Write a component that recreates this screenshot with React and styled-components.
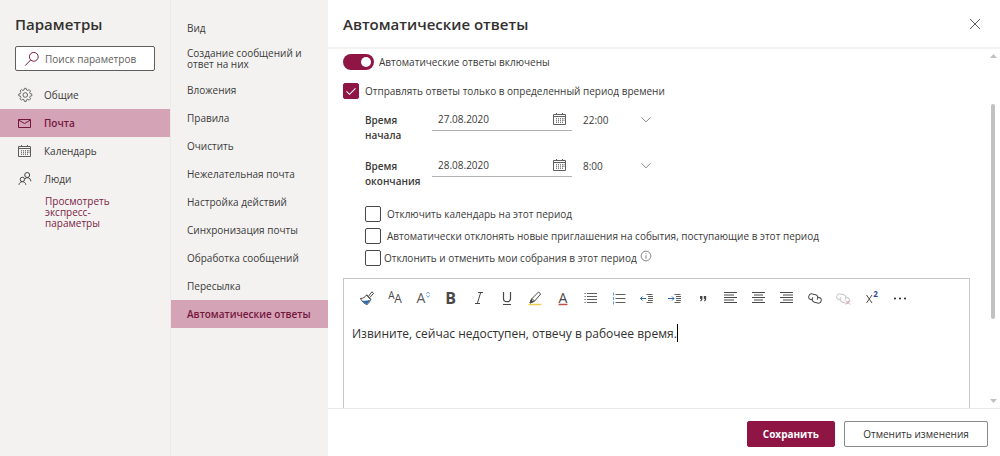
import React, { useState } from "react";
import styled, { createGlobalStyle } from "styled-components";

const GlobalStyle = createGlobalStyle`
  * {
    box-sizing: border-box;
  }

  body {
    margin: 0;
    background: #fff;
    color: #3b3a39;
    font-family: "Open Sans", "Noto Sans", sans-serif;
    font-size: 10px;
    line-height: 16px;
  }

  button,
  input,
  select,
  textarea {
    margin: 0;
    padding: 0;
    border: 0;
    outline: 0;
    background: none;
    color: inherit;
    font: inherit;
  }
`;

const Page = styled.div`
  display: flex;
  height: 100vh;
  overflow: hidden;
`;

// Left column
const Sidebar = styled.nav`
  flex: none;
  width: 170px;
  background: #f3f2f1;
`;

const Title = styled.h1`
  margin: 0;
  padding: 12px 15px 10px;
  color: #323130;
  font-size: 15px;
  font-weight: 600;
  line-height: 24px;
`;

const Search = styled.label`
  display: flex;
  align-items: center;
  gap: 5px;
  height: 25px;
  margin: 0 15px 10px;
  padding-left: 8px;
  border: 1px solid #605e5c;
  border-radius: 2px;
  background: #fff;

  svg {
    flex: none;
  }
`;

const SearchInput = styled.input`
  width: 100%;
  min-width: 0;

  &::placeholder {
    color: #605e5c;
    opacity: 1;
  }
`;

const NavLink = styled.a`
  display: flex;
  align-items: center;
  gap: 11px;
  height: 28px;
  padding-left: 17px;
  background: ${(props) => (props.$active ? "#d4a3b6" : "transparent")};
  color: ${(props) => (props.$active ? "#74163c" : "inherit")};
  font-weight: ${(props) => (props.$active ? 600 : 400)};
  text-decoration: none;
`;

const QuickLink = styled.a`
  display: block;
  width: 90px;
  margin: 3px 0 0 45px;
  color: #7b1d44;
  line-height: 11px;
  text-decoration: none;
`;

// Middle column
const Sections = styled.nav`
  flex: none;
  width: 158px;
  padding-top: 14px;
  border-left: 1px solid #eceae9;
  background: #f3f2f1;
`;

const SectionLink = styled.a`
  display: flex;
  align-items: center;
  min-height: 28px;
  padding: 6px 10px 6px 16px;
  background: ${(props) => (props.$active ? "#d4a3b6" : "transparent")};
  color: ${(props) => (props.$active ? "#74163c" : "inherit")};
  font-weight: ${(props) => (props.$active ? 600 : 400)};
  line-height: 11px;
  text-decoration: none;
`;

// Right panel
const Panel = styled.main`
  display: flex;
  flex: 1;
  flex-direction: column;
  min-width: 0;
`;

const PanelHeader = styled.header`
  display: flex;
  align-items: center;
  justify-content: space-between;
  height: 49px;
  padding: 0 17px 0 15px;
  border-bottom: 2px solid #f3f2f1;
`;

const PanelTitle = styled.h2`
  margin: 0;
  color: #323130;
  font-size: 15px;
  font-weight: 600;
  line-height: 24px;
`;

const IconButton = styled.button`
  display: flex;
  align-items: center;
  justify-content: center;
  cursor: pointer;
`;

const PanelBody = styled.div`
  display: flex;
  flex: 1;
  min-height: 0;
`;

const Form = styled.form`
  display: flex;
  flex: 1;
  flex-direction: column;
  min-width: 0;
  padding: 5px 16px 0 15px;
  overflow: hidden;
`;

const SwitchLabel = styled.label`
  display: flex;
  flex: none;
  align-items: center;
  gap: 5px;
  height: 16px;
`;

const Switch = styled.input`
  display: flex;
  align-items: center;
  justify-content: flex-end;
  width: 31px;
  height: 16px;
  padding: 0 3px;
  border-radius: 8px;
  background: #8f1544;
  appearance: none;

  &::before {
    width: 10px;
    height: 10px;
    border-radius: 50%;
    background: #fff;
    content: "";
  }

  &:not(:checked) {
    justify-content: flex-start;
    background: #605e5c;
  }
`;

const CheckLabel = styled.label`
  display: flex;
  align-items: center;
  gap: ${(props) => (props.$tight ? 3 : 6)}px;
  height: 16px;
`;

const CheckCell = styled.span`
  display: grid;
  place-items: center;

  > * {
    grid-area: 1 / 1;
  }

  svg {
    pointer-events: none;
  }
`;

const CheckInput = styled.input`
  width: 16px;
  height: 16px;
  border: 1px solid #4a4846;
  border-radius: 2px;
  background: #fff;
  appearance: none;

  &:checked {
    border-color: #8f1544;
    background: #8f1544;
  }
`;

const Period = styled.div`
  display: flex;
  flex: none;
  flex-direction: column;
  margin-top: 13px;
  padding-left: 22px;
`;

const PeriodTop = styled.div`
  flex: none;
  margin-top: 13px;
`;

const TimeRow = styled.div`
  display: flex;
  align-items: flex-start;
  height: 46px;
`;

const TimeLabel = styled.label`
  width: 67px;
  padding-top: 1px;
  font-weight: 600;
  line-height: 15px;
`;

const DateField = styled.div`
  display: flex;
  align-items: center;
  width: 140px;
  height: 19px;
  padding: 0 4px 4px 6px;
  border-bottom: 1px solid #b3b0ad;
`;

const DateInput = styled.input`
  flex: 1;
  min-width: 0;
`;

const TimeField = styled.div`
  display: grid;
  align-items: center;
  width: 69px;
  height: 19px;
  margin-left: 11px;
  padding-bottom: 4px;

  > * {
    grid-area: 1 / 1;
  }

  svg {
    justify-self: end;
    pointer-events: none;
  }
`;

const TimeSelect = styled.select`
  width: 100%;
  appearance: none;
`;

const Options = styled.div`
  display: flex;
  flex-direction: column;
  gap: 6px;
  margin-top: 2px;
`;

const OptionRow = styled.div`
  display: flex;
  align-items: flex-start;
  gap: 3px;
`;

const Editor = styled.div`
  display: flex;
  flex: 1;
  flex-direction: column;
  margin-top: 12px;
  border: 1px solid #c8c6c4;
  border-bottom: 0;
`;

const Toolbar = styled.div`
  display: flex;
  padding: 9px 0 0 9px;
`;

const ToolButton = styled(IconButton)`
  flex: none;
  width: 28px;
  height: 20px;

  svg {
    overflow: visible;
  }
`;

const Message = styled.div`
  display: flex;
  padding: 16px 8px 0;
  color: #323130;
  font-size: 12px;
  line-height: 20px;
`;

const MessageInput = styled.textarea`
  display: block;
  height: 20px;
  overflow: hidden;
  field-sizing: content;
  resize: none;
  white-space: pre;
`;

const Caret = styled.span`
  width: 1px;
  height: 18px;
  background: #000;
`;

const Scrollbar = styled.div`
  display: flex;
  flex: none;
  flex-direction: column;
  align-items: center;
  width: 14px;
  padding: 5px 0;
`;

const ScrollTrack = styled.div`
  flex: 1;
  width: 4px;
  padding-top: 46px;
`;

const ScrollThumb = styled.div`
  height: 73%;
  border-radius: 2px;
  background: #c1c1c1;
`;

const PanelFooter = styled.footer`
  display: flex;
  justify-content: flex-end;
  gap: 9px;
  height: 48px;
  padding: 12px 12px 0;
  border-top: 1px solid #eae8e7;
`;

const ActionButton = styled.button`
  min-width: ${(props) => (props.$primary ? 88 : 144)}px;
  height: 26px;
  padding: 0 15px;
  border: 1px solid ${(props) => (props.$primary ? "#8f1544" : "#8a8886")};
  border-radius: 2px;
  background: ${(props) => (props.$primary ? "#8f1544" : "#fff")};
  color: ${(props) => (props.$primary ? "#fff" : "#323130")};
  font-weight: ${(props) => (props.$primary ? 700 : 400)};
  cursor: pointer;
`;

const Icon = ({ size = 16, children, ...rest }) => (
  <svg
    width={size}
    height={size}
    viewBox="0 0 16 16"
    fill="none"
    stroke="currentColor"
    strokeWidth="1"
    aria-hidden="true"
    {...rest}
  >
    {children}
  </svg>
);

const SearchIcon = () => (
  <Icon color="#7b1d44">
    <circle cx="9.8" cy="5.8" r="4.4" />
    <path d="M6.7 9 1.2 14.6" />
  </Icon>
);

const GearIcon = () => (
  <Icon viewBox="-1 -1 18 18" stroke="#605e5c" strokeWidth="1.1">
    <path
      d="M6.9 1h2.2l.4 2 1.5.6 1.7-1.1 1.7 1.7-1.1 1.7.6 1.5 2 .4v2.2l-2 .4-.6 1.5 1.1 1.7-1.7 1.7-1.7-1.1-1.5.6-.4 2H6.9l-.4-2-1.5-.6-1.7 1.1-1.7-1.7 1.1-1.7-.6-1.5-2-.4V7.8l2-.4.6-1.5-1.1-1.7 1.7-1.7L5 3.6 6.5 3z"
      transform="translate(.9 -.4) scale(.93)"
    />
    <circle cx="8.3" cy="8" r="2.6" />
  </Icon>
);

const MailIcon = () => (
  <Icon>
    <path d="M1.5 4.5h12v8h-12zM1.5 5l6 3.5 6-3.5" />
  </Icon>
);

const CalendarIcon = () => (
  <Icon stroke="#605e5c">
    <path d="M1.5 3.5h12v10h-12zM1.5 5.5h12M4.5 2v2M10.5 2v2" />
    <path
      d="M4.5 7v5M6.5 7v5M8.5 7v5M10.5 7v5M12 7v3"
      strokeDasharray="1.4 .5"
      strokeWidth="0.8"
    />
  </Icon>
);

const PeopleIcon = () => (
  <Icon stroke="#4a4846">
    <circle cx="10.2" cy="4" r="2.5" />
    <path d="M8 7.7c1-.8 1.8-1.1 2.8-1 1.7.2 2.9 1.6 3.1 3.6" />
    <circle cx="5.4" cy="8.4" r="2.2" />
    <path d="M2 13.8c.2-2 1.6-3.1 3.4-3.1s3.2 1.1 3.4 3.1" />
  </Icon>
);

const ChevronIcon = () => (
  <Icon size={12} stroke="#605e5c">
    <path d="M2 4.5l6 6 6-6" />
  </Icon>
);

const InfoIcon = () => (
  <Icon size={12} stroke="#605e5c">
    <circle cx="8" cy="8" r="6.5" />
    <path d="M8 7v4.5M8 4.2v1.4" />
  </Icon>
);

const lines = (ends) => ends.map(([a, b], i) => `M${a} ${2.5 + i * 2.5}H${b}`).join("");

const IndentIcon = ({ right }) => (
  <Icon stroke="#605e5c">
    <path d="M7.5 4.5h6M9 6.5h5M9 8.5h5M9 10.5h5M7.5 12.5h6" />
    <path
      d={right ? "M1 8.5h6M5 6.5l2 2-2 2" : "M1.5 8.5H7M3.5 6.5l-2 2 2 2"}
      stroke="#2b6cb0"
    />
  </Icon>
);

const LinkShape = () => (
  <g transform="rotate(14 8 8.5)">
    <path d="M6 10.5H4.3a2.9 2.9 0 0 1 0-5.8h3.4a2.9 2.9 0 0 1 2.5 4.4" />
    <path d="M10 6.5h1.7a2.9 2.9 0 0 1 0 5.8H8.3a2.9 2.9 0 0 1-2.5-4.4" />
  </g>
);

const Glyph = ({ children, size = 15, x = 8, y = 13, ...rest }) => (
  <text x={x} y={y} fontSize={size} textAnchor="middle" fill="#4a4846" stroke="none" {...rest}>
    {children}
  </text>
);

const tools = [
  {
    name: "Формат по образцу",
    icon: (
      <Icon stroke="#4a4846">
        <path
          d="M1.5 8.5c2.5 0 4.5-1.2 6-3.5l4 4.5c-.6 2.2-1.7 3.9-3.5 5-2.800-.8-5-2.800-6.500-6z"
          fill="#fff"
        />
        <path
          d="M3.2 10.5c2.8.6 5.3.3 7.6-.8-.6 2-1.5 3.4-2.9 4.3-1.9-.6-3.5-1.7-4.7-3.5z"
          fill="#2b6cb0"
          stroke="none"
        />
        <path d="M7.5 4.5l4.5 5M9.5 6.3l3.4-4.5 1.7 1.5-3.8 4.3" />
      </Icon>
    ),
  },
  {
    name: "Шрифт",
    icon: (
      <Icon>
        <Glyph x={4.5} y={9} size={10}>A</Glyph>
        <Glyph x={11} y={13} size={12}>A</Glyph>
      </Icon>
    ),
  },
  {
    name: "Размер шрифта",
    icon: (
      <Icon>
        <Glyph x={6} y={13} size={14} fill="#605e5c">A</Glyph>
        <path d="M11.3 4 13 2l1.7 2M11.3 5.3l1.7 2 1.7-2" stroke="#5b9bd5" strokeWidth="0.9" />
      </Icon>
    ),
  },
  {
    name: "Полужирный",
    icon: (
      <Icon>
        <Glyph x={7.5} size={16} y={14} fontWeight="700">B</Glyph>
      </Icon>
    ),
  },
  {
    name: "Курсив",
    icon: (
      <Icon stroke="#4a4846">
        <path d="M7 2.5h5M4 13.5h5M9.7 2.5l-3.4 11" />
      </Icon>
    ),
  },
  {
    name: "Подчеркнутый",
    icon: (
      <Icon stroke="#4a4846">
        <path d="M4.5 2v6.5c0 2 1.2 3.2 3.5 3.2s3.5-1.2 3.5-3.2V2" strokeWidth="1.2" />
        <path d="M4 14.5h8" />
      </Icon>
    ),
  },
  {
    name: "Цвет выделения",
    icon: (
      <Icon stroke="#4a4846">
        <path d="M1.5 14.5h13" stroke="#f2cf4a" strokeWidth="1.5" />
        <path d="M3 13l1.5-4L11.5 2l2.2 2-6 7zM4.7 8.5l3 2.5" />
        <path d="M3 13l1-3 2.2 1.7z" fill="#4a4846" />
      </Icon>
    ),
  },
  {
    name: "Цвет шрифта",
    icon: (
      <Icon>
        <Glyph y={12.5} size={14}>A</Glyph>
        <path d="M3.5 14.5h9" stroke="#c0504d" strokeWidth="1.5" />
      </Icon>
    ),
  },
  {
    name: "Маркеры",
    icon: (
      <Icon stroke="#605e5c">
        <path d="M4 3.5h10M4 6.5h10M4 9.5h10M4 12.5h10" />
        <path d="M1.5 3.5h1.2M1.5 6.5h1.2M1.5 9.5h1.2M1.5 12.5h1.2" />
      </Icon>
    ),
  },
  {
    name: "Нумерация",
    icon: (
      <Icon stroke="#605e5c">
        <path d="M4.5 4.5h10M4.5 8.5h10M4.5 12.5h10" />
        <path d="M2.5 2.5v3M2.5 7v3M2.5 11.5v3" stroke="#5b9bd5" />
      </Icon>
    ),
  },
  { name: "Уменьшить отступ", icon: <IndentIcon /> },
  { name: "Увеличить отступ", icon: <IndentIcon right /> },
  {
    name: "Цитата",
    icon: (
      <Icon fill="#4a4846" stroke="none">
        <path d="M5 6h2.4v2.8c0 1.4-.7 2.3-1.9 2.7l-.4-.7c.7-.4 1-.9 1-1.7H5zM8.8 6h2.4v2.8c0 1.4-.7 2.3-1.9 2.7l-.4-.7c.7-.4 1-.9 1-1.7H8.8z" />
      </Icon>
    ),
  },
  {
    name: "По левому краю",
    icon: (
      <Icon stroke="#4a4846">
        <path d={lines([[1, 14], [1, 11], [1, 14], [1, 11], [1, 14]])} />
      </Icon>
    ),
  },
  {
    name: "По центру",
    icon: (
      <Icon stroke="#4a4846">
        <path d={lines([[1, 14], [3, 12], [1, 14], [3, 12], [1, 14]])} />
      </Icon>
    ),
  },
  {
    name: "По правому краю",
    icon: (
      <Icon stroke="#4a4846">
        <path d={lines([[1, 14], [4, 14], [1, 14], [4, 14], [1, 14]])} />
      </Icon>
    ),
  },
  {
    name: "Вставить ссылку",
    icon: (
      <Icon stroke="#4a4846">
        <LinkShape />
      </Icon>
    ),
  },
  {
    name: "Удалить ссылку",
    icon: (
      <Icon stroke="#c8c6c4">
        <LinkShape />
        <path d="M11 10.5l4 4M15 10.5l-4 4" stroke="#c9a0b0" />
      </Icon>
    ),
  },
  {
    name: "Надстрочный",
    icon: (
      <Icon>
        <path d="M3.5 5l5.5 8M9 5l-5.5 8" stroke="#4a4846" />
        <Glyph x={12.5} y={7} size={8} fill="#1f4e9c" fontWeight="700">2</Glyph>
      </Icon>
    ),
  },
  {
    name: "Еще",
    icon: (
      <Icon fill="#201f1e" stroke="none">
        <circle cx="4" cy="8.5" r="1" />
        <circle cx="9" cy="8.5" r="1" />
        <circle cx="14" cy="8.5" r="1" />
      </Icon>
    ),
  },
];

const navItems = [
  { label: "Общие", icon: <GearIcon /> },
  { label: "Почта", icon: <MailIcon />, active: true },
  { label: "Календарь", icon: <CalendarIcon /> },
  { label: "Люди", icon: <PeopleIcon /> },
];

const sections = [
  "Вид",
  "Создание сообщений и ответ на них",
  "Вложения",
  "Правила",
  "Очистить",
  "Нежелательная почта",
  "Настройка действий",
  "Синхронизация почты",
  "Обработка сообщений",
  "Пересылка",
  "Автоматические ответы",
];

const Checkbox = ({ label, tight, defaultChecked = false }) => {
  const [checked, setChecked] = useState(defaultChecked);

  return (
    <CheckLabel $tight={tight}>
      <CheckCell>
        <CheckInput
          type="checkbox"
          checked={checked}
          onChange={(e) => setChecked(e.target.checked)}
        />
        {checked && (
          <Icon size={12} stroke="#fff" strokeWidth="1.4">
            <path d="M2 8.5l4 4 8-8" />
          </Icon>
        )}
      </CheckCell>
      {label}
    </CheckLabel>
  );
};

const TimePeriod = ({ id, label, date, time }) => (
  <TimeRow>
    <TimeLabel htmlFor={id}>{label}</TimeLabel>
    <DateField>
      <DateInput id={id} defaultValue={date} />
      <IconButton type="button" aria-label="Выбрать дату">
        <CalendarIcon />
      </IconButton>
    </DateField>
    <TimeField>
      <TimeSelect aria-label={label} defaultValue={time}>
        <option>{time}</option>
      </TimeSelect>
      <ChevronIcon />
    </TimeField>
  </TimeRow>
);

const App = () => {
  const [enabled, setEnabled] = useState(true);
  const [message, setMessage] = useState(
    "Извините, сейчас недоступен, отвечу в рабочее время."
  );

  return (
    <Page>
      <GlobalStyle />
      <Sidebar>
        <Title>Параметры</Title>
        <Search>
          <SearchIcon />
          <SearchInput placeholder="Поиск параметров" aria-label="Поиск параметров" />
        </Search>
        {navItems.map((item) => (
          <NavLink key={item.label} href="#" $active={item.active}>
            {item.icon}
            {item.label}
          </NavLink>
        ))}
        <QuickLink href="#">Просмотреть экспресс-параметры</QuickLink>
      </Sidebar>

      <Sections>
        {sections.map((name) => (
          <SectionLink key={name} href="#" $active={name === "Автоматические ответы"}>
            {name}
          </SectionLink>
        ))}
      </Sections>

      <Panel>
        <PanelHeader>
          <PanelTitle>Автоматические ответы</PanelTitle>
          <IconButton type="button" aria-label="Закрыть">
            <Icon stroke="#605e5c">
              <path d="M3 3l10 10M13 3 3 13" />
            </Icon>
          </IconButton>
        </PanelHeader>

        <PanelBody>
          <Form id="replies" onSubmit={(e) => e.preventDefault()}>
            <SwitchLabel>
              <Switch
                type="checkbox"
                role="switch"
                checked={enabled}
                onChange={(e) => setEnabled(e.target.checked)}
              />
              Автоматические ответы включены
            </SwitchLabel>
            <PeriodTop>
              <Checkbox
                label="Отправлять ответы только в определенный период времени"
                defaultChecked
              />
            </PeriodTop>

            <Period>
              <TimePeriod id="start" label="Время начала" date="27.08.2020" time="22:00" />
              <TimePeriod id="end" label="Время окончания" date="28.08.2020" time="8:00" />
              <Options>
                <Checkbox label="Отключить календарь на этот период" />
                <Checkbox label="Автоматически отклонять новые приглашения на события, поступающие в этот период" />
                <OptionRow>
                  <Checkbox label="Отклонить и отменить мои собрания в этот период" tight />
                  <InfoIcon />
                </OptionRow>
              </Options>
            </Period>

            <Editor>
              <Toolbar>
                {tools.map((tool) => (
                  <ToolButton key={tool.name} type="button" aria-label={tool.name}>
                    {tool.icon}
                  </ToolButton>
                ))}
              </Toolbar>
              <Message>
                <MessageInput
                  rows={1}
                  aria-label="Текст ответа"
                  value={message}
                  onChange={(e) => setMessage(e.target.value)}
                />
                <Caret />
              </Message>
            </Editor>
          </Form>

          <Scrollbar aria-hidden="true">
            <svg width="7" height="4" viewBox="0 0 7 4" fill="#c1c1c1">
              <path d="M0 4 3.5 0 7 4z" />
            </svg>
            <ScrollTrack>
              <ScrollThumb />
            </ScrollTrack>
            <svg width="7" height="4" viewBox="0 0 7 4" fill="#c1c1c1">
              <path d="M0 0h7L3.5 4z" />
            </svg>
          </Scrollbar>
        </PanelBody>

        <PanelFooter>
          <ActionButton type="submit" form="replies" $primary>
            Сохранить
          </ActionButton>
          <ActionButton type="button">Отменить изменения</ActionButton>
        </PanelFooter>
      </Panel>
    </Page>
  );
};

export default App;
